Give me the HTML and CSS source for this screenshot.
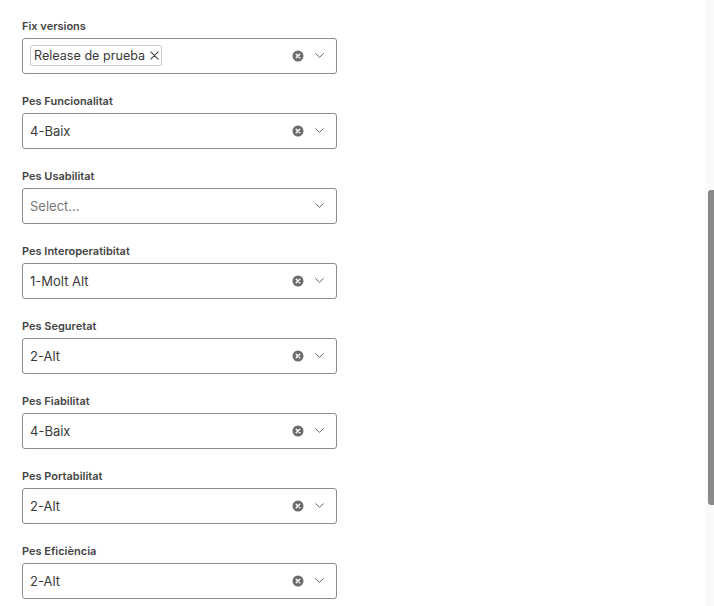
FILE: index.html
```html
<!DOCTYPE html>
<html lang="ca">
<head>
<meta charset="utf-8">
<title>Camps</title>
<link rel="stylesheet" href="styles.css">
</head>
<body>
<main class="form">
  <div class="field">
    <div class="label">Fix versions</div>
    <div class="select">
      <div class="value"><span class="tag">Release de prueba<svg class="tag-x" viewBox="0 0 9 9" width="9" height="9"><path d="M0.8 0.8l7.4 7.4M8.2 0.8l-7.4 7.4" stroke="#444" stroke-width="1.1" stroke-linecap="round"/></svg></span></div>
      <span class="clear"><svg viewBox="0 0 12 12" width="12" height="12"><circle cx="6" cy="6" r="5.5" fill="#6b6b6b"/><path d="M4.2 4.2l3.6 3.6M7.8 4.2l-3.6 3.6" stroke="#fff" stroke-width="1.4" stroke-linecap="round"/></svg></span>
      <span class="chev"><svg viewBox="0 0 9 5" width="9" height="5"><path d="M0.7 0.7l3.8 3.6 3.8-3.6" fill="none" stroke="#666" stroke-width="1" stroke-linecap="round" stroke-linejoin="round"/></svg></span>
    </div>
  </div>
  <div class="field">
    <div class="label">Pes Funcionalitat</div>
    <div class="select">
      <div class="value">4-Baix</div>
      <span class="clear"><svg viewBox="0 0 12 12" width="12" height="12"><circle cx="6" cy="6" r="5.5" fill="#6b6b6b"/><path d="M4.2 4.2l3.6 3.6M7.8 4.2l-3.6 3.6" stroke="#fff" stroke-width="1.4" stroke-linecap="round"/></svg></span>
      <span class="chev"><svg viewBox="0 0 9 5" width="9" height="5"><path d="M0.7 0.7l3.8 3.6 3.8-3.6" fill="none" stroke="#666" stroke-width="1" stroke-linecap="round" stroke-linejoin="round"/></svg></span>
    </div>
  </div>
  <div class="field">
    <div class="label">Pes Usabilitat</div>
    <div class="select">
      <div class="value placeholder">Select...</div>
      <span class="chev"><svg viewBox="0 0 9 5" width="9" height="5"><path d="M0.7 0.7l3.8 3.6 3.8-3.6" fill="none" stroke="#666" stroke-width="1" stroke-linecap="round" stroke-linejoin="round"/></svg></span>
    </div>
  </div>
  <div class="field">
    <div class="label">Pes Interoperatibitat</div>
    <div class="select">
      <div class="value">1-Molt Alt</div>
      <span class="clear"><svg viewBox="0 0 12 12" width="12" height="12"><circle cx="6" cy="6" r="5.5" fill="#6b6b6b"/><path d="M4.2 4.2l3.6 3.6M7.8 4.2l-3.6 3.6" stroke="#fff" stroke-width="1.4" stroke-linecap="round"/></svg></span>
      <span class="chev"><svg viewBox="0 0 9 5" width="9" height="5"><path d="M0.7 0.7l3.8 3.6 3.8-3.6" fill="none" stroke="#666" stroke-width="1" stroke-linecap="round" stroke-linejoin="round"/></svg></span>
    </div>
  </div>
  <div class="field">
    <div class="label">Pes Seguretat</div>
    <div class="select">
      <div class="value">2-Alt</div>
      <span class="clear"><svg viewBox="0 0 12 12" width="12" height="12"><circle cx="6" cy="6" r="5.5" fill="#6b6b6b"/><path d="M4.2 4.2l3.6 3.6M7.8 4.2l-3.6 3.6" stroke="#fff" stroke-width="1.4" stroke-linecap="round"/></svg></span>
      <span class="chev"><svg viewBox="0 0 9 5" width="9" height="5"><path d="M0.7 0.7l3.8 3.6 3.8-3.6" fill="none" stroke="#666" stroke-width="1" stroke-linecap="round" stroke-linejoin="round"/></svg></span>
    </div>
  </div>
  <div class="field">
    <div class="label">Pes Fiabilitat</div>
    <div class="select">
      <div class="value">4-Baix</div>
      <span class="clear"><svg viewBox="0 0 12 12" width="12" height="12"><circle cx="6" cy="6" r="5.5" fill="#6b6b6b"/><path d="M4.2 4.2l3.6 3.6M7.8 4.2l-3.6 3.6" stroke="#fff" stroke-width="1.4" stroke-linecap="round"/></svg></span>
      <span class="chev"><svg viewBox="0 0 9 5" width="9" height="5"><path d="M0.7 0.7l3.8 3.6 3.8-3.6" fill="none" stroke="#666" stroke-width="1" stroke-linecap="round" stroke-linejoin="round"/></svg></span>
    </div>
  </div>
  <div class="field">
    <div class="label">Pes Portabilitat</div>
    <div class="select">
      <div class="value">2-Alt</div>
      <span class="clear"><svg viewBox="0 0 12 12" width="12" height="12"><circle cx="6" cy="6" r="5.5" fill="#6b6b6b"/><path d="M4.2 4.2l3.6 3.6M7.8 4.2l-3.6 3.6" stroke="#fff" stroke-width="1.4" stroke-linecap="round"/></svg></span>
      <span class="chev"><svg viewBox="0 0 9 5" width="9" height="5"><path d="M0.7 0.7l3.8 3.6 3.8-3.6" fill="none" stroke="#666" stroke-width="1" stroke-linecap="round" stroke-linejoin="round"/></svg></span>
    </div>
  </div>
  <div class="field">
    <div class="label">Pes Eficiència</div>
    <div class="select">
      <div class="value">2-Alt</div>
      <span class="clear"><svg viewBox="0 0 12 12" width="12" height="12"><circle cx="6" cy="6" r="5.5" fill="#6b6b6b"/><path d="M4.2 4.2l3.6 3.6M7.8 4.2l-3.6 3.6" stroke="#fff" stroke-width="1.4" stroke-linecap="round"/></svg></span>
      <span class="chev"><svg viewBox="0 0 9 5" width="9" height="5"><path d="M0.7 0.7l3.8 3.6 3.8-3.6" fill="none" stroke="#666" stroke-width="1" stroke-linecap="round" stroke-linejoin="round"/></svg></span>
    </div>
  </div>
</main>
<div class="scroll-track"><div class="scroll-thumb"></div></div>
</body>
</html>
```

FILE: styles.css
```css
html, body {
  margin: 0;
  height: 100%;
  overflow: hidden;
  background: #fff;
}

body {
  font-family: Inter, "Noto Sans", "Liberation Sans", sans-serif;
  color: #2b2b2b;
}

.form {
  padding: 19px 0 0 22px;
  display: flex;
  flex-direction: column;
  gap: 20px;
}

.field {
  display: flex;
  flex-direction: column;
  gap: 5px;
}

.label {
  font-size: 11px;
  line-height: 14px;
  font-weight: 600;
  color: #444;
}

.select {
  box-sizing: border-box;
  width: 315px;
  height: 36px;
  border: 1px solid #8c8a96;
  border-radius: 3px;
  display: flex;
  align-items: center;
  padding: 0 12px 1px 7px;
}

.value {
  flex: 1;
  font-size: 13px;
  color: #3a3a3a;
  display: flex;
  align-items: center;
}

.placeholder {
  color: #777;
}

.tag {
  display: flex;
  align-items: center;
  gap: 5px;
  font-size: 12.6px;
  line-height: 19px;
  border: 1px solid #c9c9cf;
  border-radius: 2px;
  padding: 0 2px 0 3px;
  color: #3a3a3a;
}

.tag-x {
  display: block;
}

.clear {
  display: flex;
  margin-right: 11px;
}

.chev {
  display: flex;
}

.scroll-track {
  position: fixed;
  top: 0;
  right: 0;
  width: 9px;
  height: 100%;
  background: #fafafa;
}

.scroll-thumb {
  position: absolute;
  top: 190px;
  right: 0;
  width: 6px;
  height: 315px;
  border-radius: 3px 0 0 3px;
  background: #8a8a8a;
}
```
